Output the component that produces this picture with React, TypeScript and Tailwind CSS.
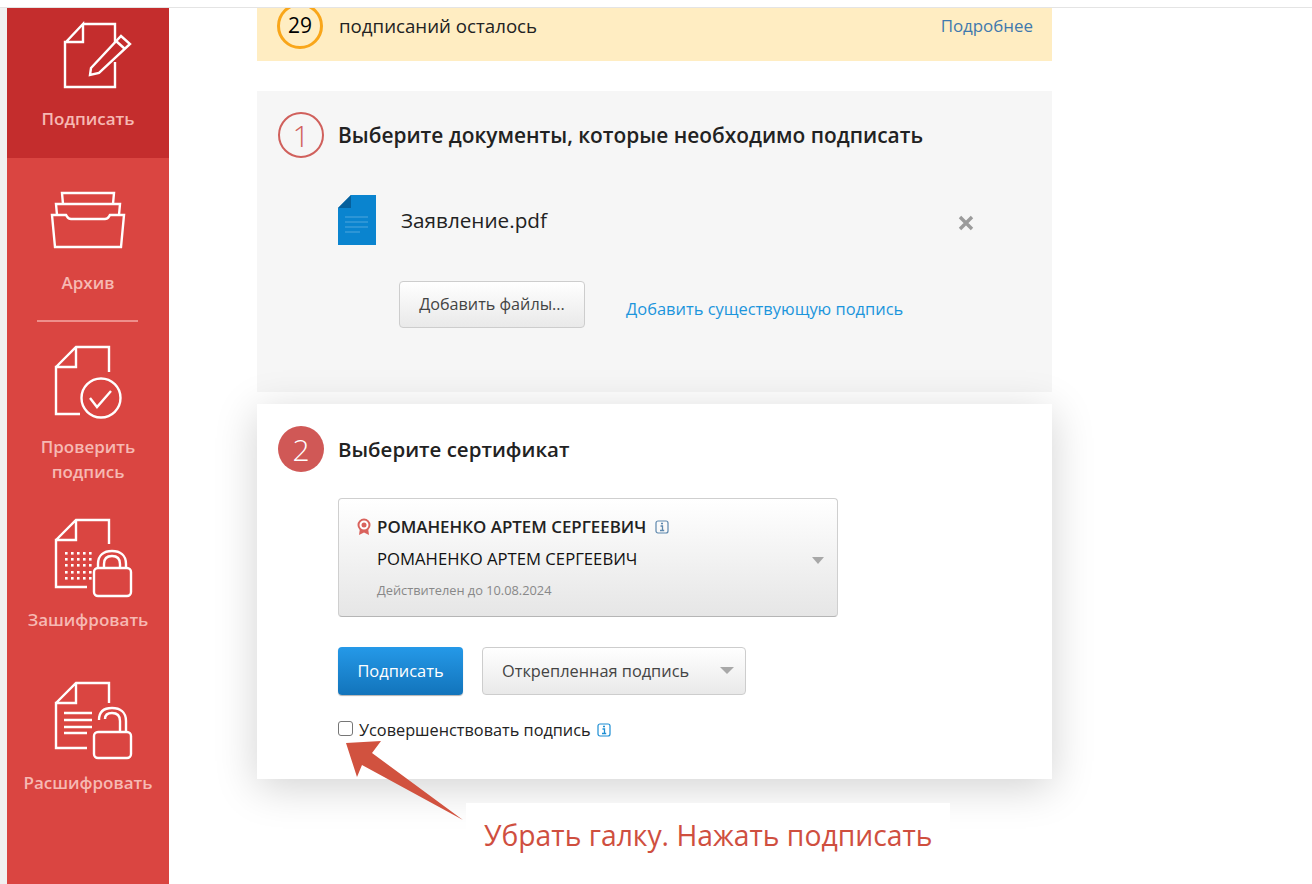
import React from 'react';

const docOutline = (top: number, rightEnd: number, leftBottom: number, bottomEnd: number) =>
  `M56 ${top + 20}L76 ${top}H109V${rightEnd}M76 ${top}V${top + 20}H56V${leftBottom}H${bottomEnd}`;

function Svg({ box, w, h, children }: { box: string; w: number; h: number; children: React.ReactNode }) {
  return (
    <svg width={w} height={h} viewBox={box} fill="none" stroke="#fff" strokeWidth="2.4" className="block">
      {children}
    </svg>
  );
}

function SignIcon() {
  return (
    <Svg box="43 20 90 70" w={90} h={70}>
      <path d="M83 24H115V45M65 43L83 24V42H65V87H115V62" />
      <path d="M90 75L91 68L121 36L130 44L99 73Z" fill="#c42d2d" />
      <path d="M116 41L125 49" />
    </Svg>
  );
}

function ArchiveIcon() {
  return (
    <Svg box="48 188 80 62" w={80} h={62}>
      <path d="M63 204L62 193H114L113 204" />
      <path d="M57 215L56 204H120L119 215" />
      <path d="M52 215H66C68 218 68 219 71 219H105C108 219 108 218 110 215H124L121 247H55Z" />
    </Svg>
  );
}

function VerifyIcon() {
  return (
    <Svg box="48 342 80 80" w={80} h={80}>
      <path d={docOutline(346, 371, 413, 80)} />
      <circle cx="101" cy="397" r="19.5" />
      <path d="M90 397L97 406L111 390" />
    </Svg>
  );
}

function EncryptIcon() {
  const cols = [65, 71, 77, 83, 89];
  const rows = [552, 558, 564, 571, 577];
  return (
    <Svg box="43 516 90 84" w={90} h={84}>
      <path d={docOutline(520, 544, 587, 87)} />
      <g fill="#fff" stroke="none">
        {rows.map((y) => cols.map((x) => <rect key={`${x}-${y}`} x={x} y={y} width="2.6" height="2.6" />))}
      </g>
      <rect x="94" y="568" width="37" height="28" rx="4" />
      <path d="M98 568V564C98 555 104 551 112 551C120 551 126 555 126 564V568" />
      <path d="M104 568V564C104 558 107 556 112 556C117 556 120 558 120 564V568" />
    </Svg>
  );
}

function DecryptIcon() {
  return (
    <Svg box="43 679 90 84" w={90} h={84}>
      <path d={docOutline(683, 703, 748, 87)} />
      <path d="M64 713H92M64 720H92M64 727H92M64 733H87" />
      <rect x="94" y="732" width="37" height="26" rx="4" />
      <path d="M99 720C99 712 104 708 112 708C120 708 126 712 126 721V732" />
      <path d="M105 719C105 715 108 713 112 713C117 713 120 715 120 721V732" />
    </Svg>
  );
}

function SideItem({ icon, label, pt, gap, active }: { icon: React.ReactNode; label: React.ReactNode; pt: string; gap: string; active?: boolean }) {
  return (
    <div className={`flex flex-col items-center ${pt} ${gap} ${active ? 'bg-[#c42d2d] h-[150px]' : ''}`}>
      {icon}
      <div className="text-[17px] leading-[25px] font-semibold text-[#f6b9b3] text-center">{label}</div>
    </div>
  );
}

function InfoIcon({ color }: { color: string }) {
  return (
    <svg width="14" height="14" viewBox="0 0 14 14" fill="none" className="shrink-0">
      <rect x="1" y="1" width="12" height="12" rx="2" stroke={color} strokeWidth="1.2" />
      <path d="M6 3.5h2M5.5 6h2v4.2M5 10.5h4.2" stroke={color} strokeWidth="1.3" />
    </svg>
  );
}

export default function App() {
  return (
    <div className="relative h-[884px] w-[1312px] overflow-hidden bg-white font-['Open_Sans','Noto_Sans',sans-serif] text-[#222]">
      <div className="h-[8px] border-b border-[#e4e4e4] bg-white" />
      <div className="flex h-[876px]">
        <aside className="h-full w-[169px] border-l-[7px] border-[#f1f1f1] bg-[#da4541]">
          <SideItem active pt="pt-[12px]" gap="gap-[16px]" icon={<SignIcon />} label="Подписать" />
          <SideItem pt="pt-[30px]" gap="gap-[20px]" icon={<ArchiveIcon />} label="Архив" />
          <div className="ml-[30px] mt-[25px] h-[2px] w-[101px] bg-[#ee8f8b]" />
          <SideItem pt="pt-[21px]" gap="gap-[11px]" icon={<VerifyIcon />} label={<>Проверить<br />подпись</>} />
          <SideItem pt="pt-[32px]" gap="gap-[7px]" icon={<EncryptIcon />} label="Зашифровать" />
          <SideItem pt="pt-[47px]" gap="gap-[7px]" icon={<DecryptIcon />} label="Расшифровать" />
        </aside>

        <main className="ml-[88px] w-[795px]">
          <div className="flex h-[53px] items-start overflow-hidden bg-[#ffedc2] pl-[20px] pr-[19px]">
            <div className="-mt-[5px] flex h-[46px] w-[46px] shrink-0 items-center justify-center rounded-full border-[3px] border-[#f9a61a] text-[21px] font-normal text-black">29</div>
            <div className="ml-[16px] mt-[6px] text-[18.7px] leading-[24px]">подписаний осталось</div>
            <a className="ml-auto mt-[6px] text-[16.9px] leading-[24px] text-[#3f79ae]">Подробнее</a>
          </div>

          <section className="mt-[30px] h-[301px] bg-[#f6f6f6] pl-[21px] pt-[21px]">
            <div className="flex items-center">
              <div className="flex h-[46px] w-[46px] items-center justify-center rounded-full border-2 border-[#d0605c] text-[30px] font-light text-[#d0605c]">1</div>
              <h2 className="ml-[14px] text-[20.9px] font-semibold leading-[46px]">Выберите документы, которые необходимо подписать</h2>
            </div>
            <div className="ml-[60px] mt-[37px] flex items-center pr-[78px]">
              <svg width="38" height="50" viewBox="0 0 38 50" className="shrink-0">
                <path d="M13 0H38V50H0V13Z" fill="#0a84cf" />
                <path d="M13 0V13H0Z" fill="#06609c" />
                <path d="M7 22H30M7 27H30M7 32H30M7 37H22" stroke="#4ea5dd" strokeWidth="1.2" />
              </svg>
              <span className="ml-[25px] mt-[1px] text-[20.7px]">Заявление.pdf</span>
              <svg width="16" height="16" viewBox="0 0 16 16" className="ml-auto mt-[6px]">
                <path d="M2 2L14 14M14 2L2 14" stroke="#9b9b9b" strokeWidth="3.4" />
              </svg>
            </div>
            <div className="ml-[121px] mt-[36px] flex items-center">
              <button className="h-[47px] w-[186px] rounded-[4px] border border-[#cdcdcd] bg-gradient-to-b from-white to-[#e9e9e9] text-[16.2px] text-[#444]">Добавить файлы...</button>
              <a className="ml-[41px] mt-[9px] text-[16.45px] text-[#1c95dc]">Добавить существующую подпись</a>
            </div>
          </section>

          <section className="relative mt-[12px] h-[375px] bg-white pl-[21px] pt-[22px] shadow-[0_8px_40px_rgba(0,0,0,0.18)]">
            <div className="flex items-center">
              <div className="flex h-[46px] w-[46px] items-center justify-center rounded-full bg-[#d05856] text-[30px] font-light text-white">2</div>
              <h2 className="ml-[14px] text-[20.5px] font-semibold leading-[46px]">Выберите сертификат</h2>
            </div>
            <div className="relative ml-[60px] mt-[26px] h-[119px] w-[500px] rounded-[4px] border border-[#cfcfcf] border-b-[#b5b5b5] bg-gradient-to-b from-white to-[#e6e6e6] pl-[17px] pt-[15px]">
              <div className="flex items-center leading-[26px]">
                <svg width="16" height="18" viewBox="0 0 16 18" className="mr-[5px] shrink-0">
                  <path d="M4 10L3 17L8 14.5L13 17L12 10Z" fill="#d9625c" />
                  <circle cx="8" cy="7" r="5.5" fill="#fff" stroke="#d9625c" strokeWidth="2" />
                  <circle cx="8" cy="7" r="2.5" fill="#d9625c" />
                </svg>
                <span className="text-[16.9px] font-semibold text-[#222]">РОМАНЕНКО АРТЕМ СЕРГЕЕВИЧ</span>
                <span className="ml-[9px]"><InfoIcon color="#5d87ad" /></span>
              </div>
              <div className="ml-[21px] mt-[6px] text-[16.7px] leading-[26px] text-[#111]">РОМАНЕНКО АРТЕМ СЕРГЕЕВИЧ</div>
              <div className="ml-[21px] mt-[8px] text-[12.8px] leading-[20px] text-[#888]">Действителен до 10.08.2024</div>
              <div className="absolute right-[13px] top-[58px] h-0 w-0 border-x-[6px] border-t-[7px] border-x-transparent border-t-[#a8a8a8]" />
            </div>
            <div className="ml-[60px] mt-[30px] flex items-center">
              <button className="h-[48px] w-[125px] rounded-[4px] bg-gradient-to-b from-[#2599e8] to-[#1274bb] text-[16.4px] text-white shadow-[0_1px_1px_rgba(0,0,0,0.3)]">Подписать</button>
              <button className="relative ml-[19px] h-[48px] w-[264px] rounded-[4px] border border-[#cdcdcd] bg-gradient-to-b from-white to-[#e9e9e9] pl-[19px] text-left text-[16.35px] text-[#444]">
                Открепленная подпись
                <span className="absolute right-[11px] top-[19px] h-0 w-0 border-x-[7px] border-t-[7px] border-x-transparent border-t-[#a8a8a8]" />
              </button>
            </div>
            <label className="ml-[60px] mt-[24px] flex items-center">
              <span className="-mt-[3px] h-[15px] w-[15px] rounded-[3px] border border-[#767676] bg-white" />
              <span className="ml-[6px] text-[16.3px] leading-[22px] text-[#222]">Усовершенствовать подпись</span>
              <span className="ml-[6px]"><InfoIcon color="#1c8ed4" /></span>
            </label>
          </section>
        </main>
      </div>

      <div className="absolute left-[466px] top-[803px] flex h-[65px] w-[484px] items-center bg-white pl-[18px] text-[28.3px] text-[#cf4f3f]">Убрать галку. Нажать подписать</div>
      <svg className="absolute left-[340px] top-[735px]" width="130" height="90" viewBox="340 735 130 90">
        <path d="M346 743L381 741L372 753L463 820L362 765L357 777Z" fill="#d1523f" />
      </svg>
    </div>
  );
}
